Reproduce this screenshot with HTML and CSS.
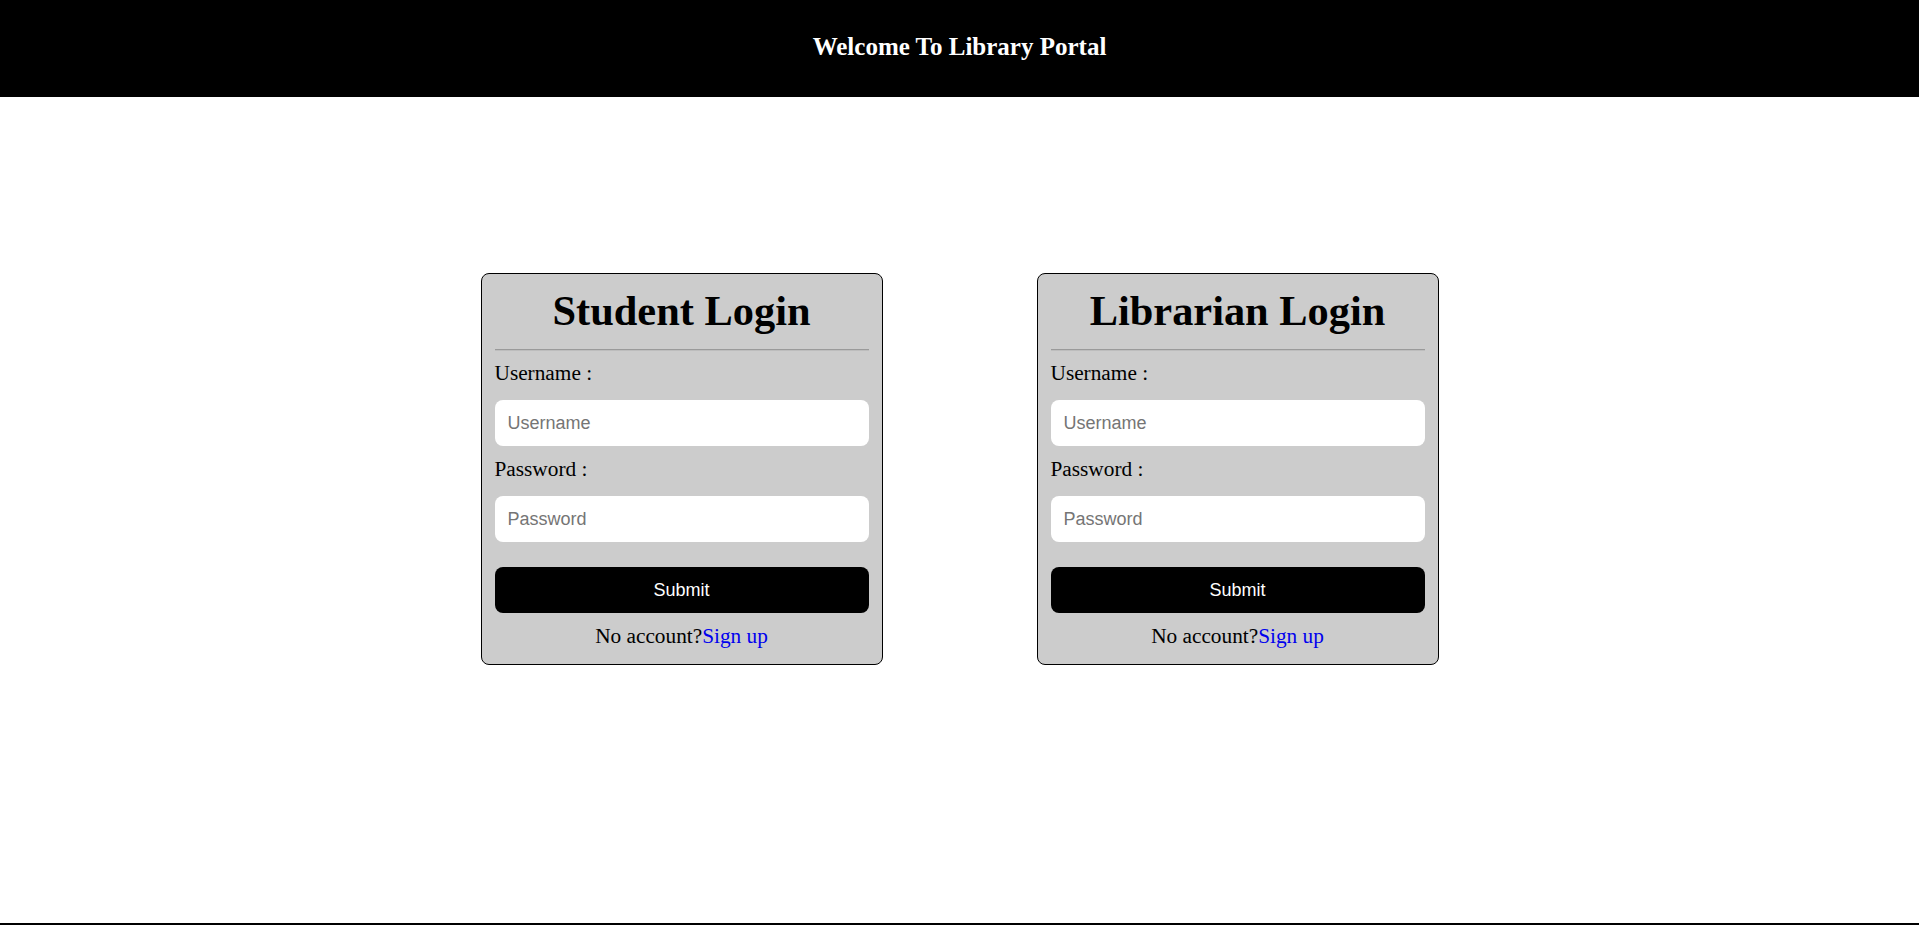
FILE: index.html
```html
<!DOCTYPE html>
<html lang="en">
<head>
<meta charset="utf-8">
<title>Library Portal</title>
<link rel="stylesheet" href="styles.css">
</head>
<body>
<header class="topbar">
  <h3 class="topbar-title">Welcome To Library Portal</h3>
</header>
<main class="main">
  <form class="card">
    <h1 class="card-title">Student Login</h1>
    <hr class="card-rule">
    <label class="field-label">Username :</label>
    <input class="field-input" type="text" placeholder="Username">
    <label class="field-label field-label-second">Password :</label>
    <input class="field-input" type="password" placeholder="Password">
    <button class="submit-btn" type="button">Submit</button>
    <p class="signup">No account?<a class="signup-link" href="#">Sign up</a></p>
  </form>
  <form class="card">
    <h1 class="card-title">Librarian Login</h1>
    <hr class="card-rule">
    <label class="field-label">Username :</label>
    <input class="field-input" type="text" placeholder="Username">
    <label class="field-label field-label-second">Password :</label>
    <input class="field-input" type="password" placeholder="Password">
    <button class="submit-btn" type="button">Submit</button>
    <p class="signup">No account?<a class="signup-link" href="#">Sign up</a></p>
  </form>
</main>
<footer class="footer"></footer>
</body>
</html>
```
FILE: styles.css
```css
html, body {
  margin: 0;
  padding: 0;
  background: #fff;
  font-family: "Liberation Serif", "Times New Roman", serif;
}

.topbar {
  height: 97px;
  background: #000;
  display: flex;
  align-items: center;
  justify-content: center;
}

.topbar-title {
  margin: 0;
  color: #fff;
  font-size: 25px;
  font-weight: bold;
  line-height: 28px;
  padding-bottom: 3px;
}

.main {
  box-sizing: border-box;
  height: 826px;
  padding-top: 176px;
  display: flex;
  justify-content: center;
  align-items: flex-start;
  gap: 154px;
}

.card {
  box-sizing: border-box;
  width: 402px;
  background: #ccc;
  border: 1px solid #000;
  border-radius: 8px;
  padding: 13px 13px 16px;
  margin: 0;
  display: flex;
  flex-direction: column;
}

.card-title {
  margin: 0;
  text-align: center;
  font-size: 42.4px;
  font-weight: bold;
  line-height: 47px;
  color: #000;
}

.card-rule {
  margin: 15px 0 0 0;
  height: 0;
  border: 0;
  border-top: 1px solid #9a9a9a;
  border-bottom: 1px solid #bdbdbd;
}

.field-label {
  display: block;
  margin-top: 11px;
  font-size: 21.3px;
  line-height: 23px;
  color: #000;
}

.field-label-second {
  margin-top: 12px;
}

.field-input {
  box-sizing: border-box;
  margin-top: 15px;
  width: 100%;
  height: 46px;
  border: 0;
  border-radius: 8px;
  background: #fff;
  padding: 0 13px;
  font-family: "Liberation Sans", Arial, sans-serif;
  font-size: 18px;
  color: #000;
  outline: none;
}

.field-input::placeholder {
  color: #757575;
}

.submit-btn {
  box-sizing: border-box;
  margin-top: 25px;
  width: 100%;
  height: 46px;
  border: 0;
  border-radius: 8px;
  background: #000;
  color: #fff;
  font-family: "Liberation Sans", Arial, sans-serif;
  font-size: 18px;
  cursor: pointer;
}

.signup {
  margin: 12px 0 0 0;
  text-align: center;
  font-size: 21.3px;
  line-height: 23px;
  color: #000;
}

.signup-link {
  color: #00e;
  text-decoration: none;
}

.footer {
  height: 2px;
  background: #000;
}
```
